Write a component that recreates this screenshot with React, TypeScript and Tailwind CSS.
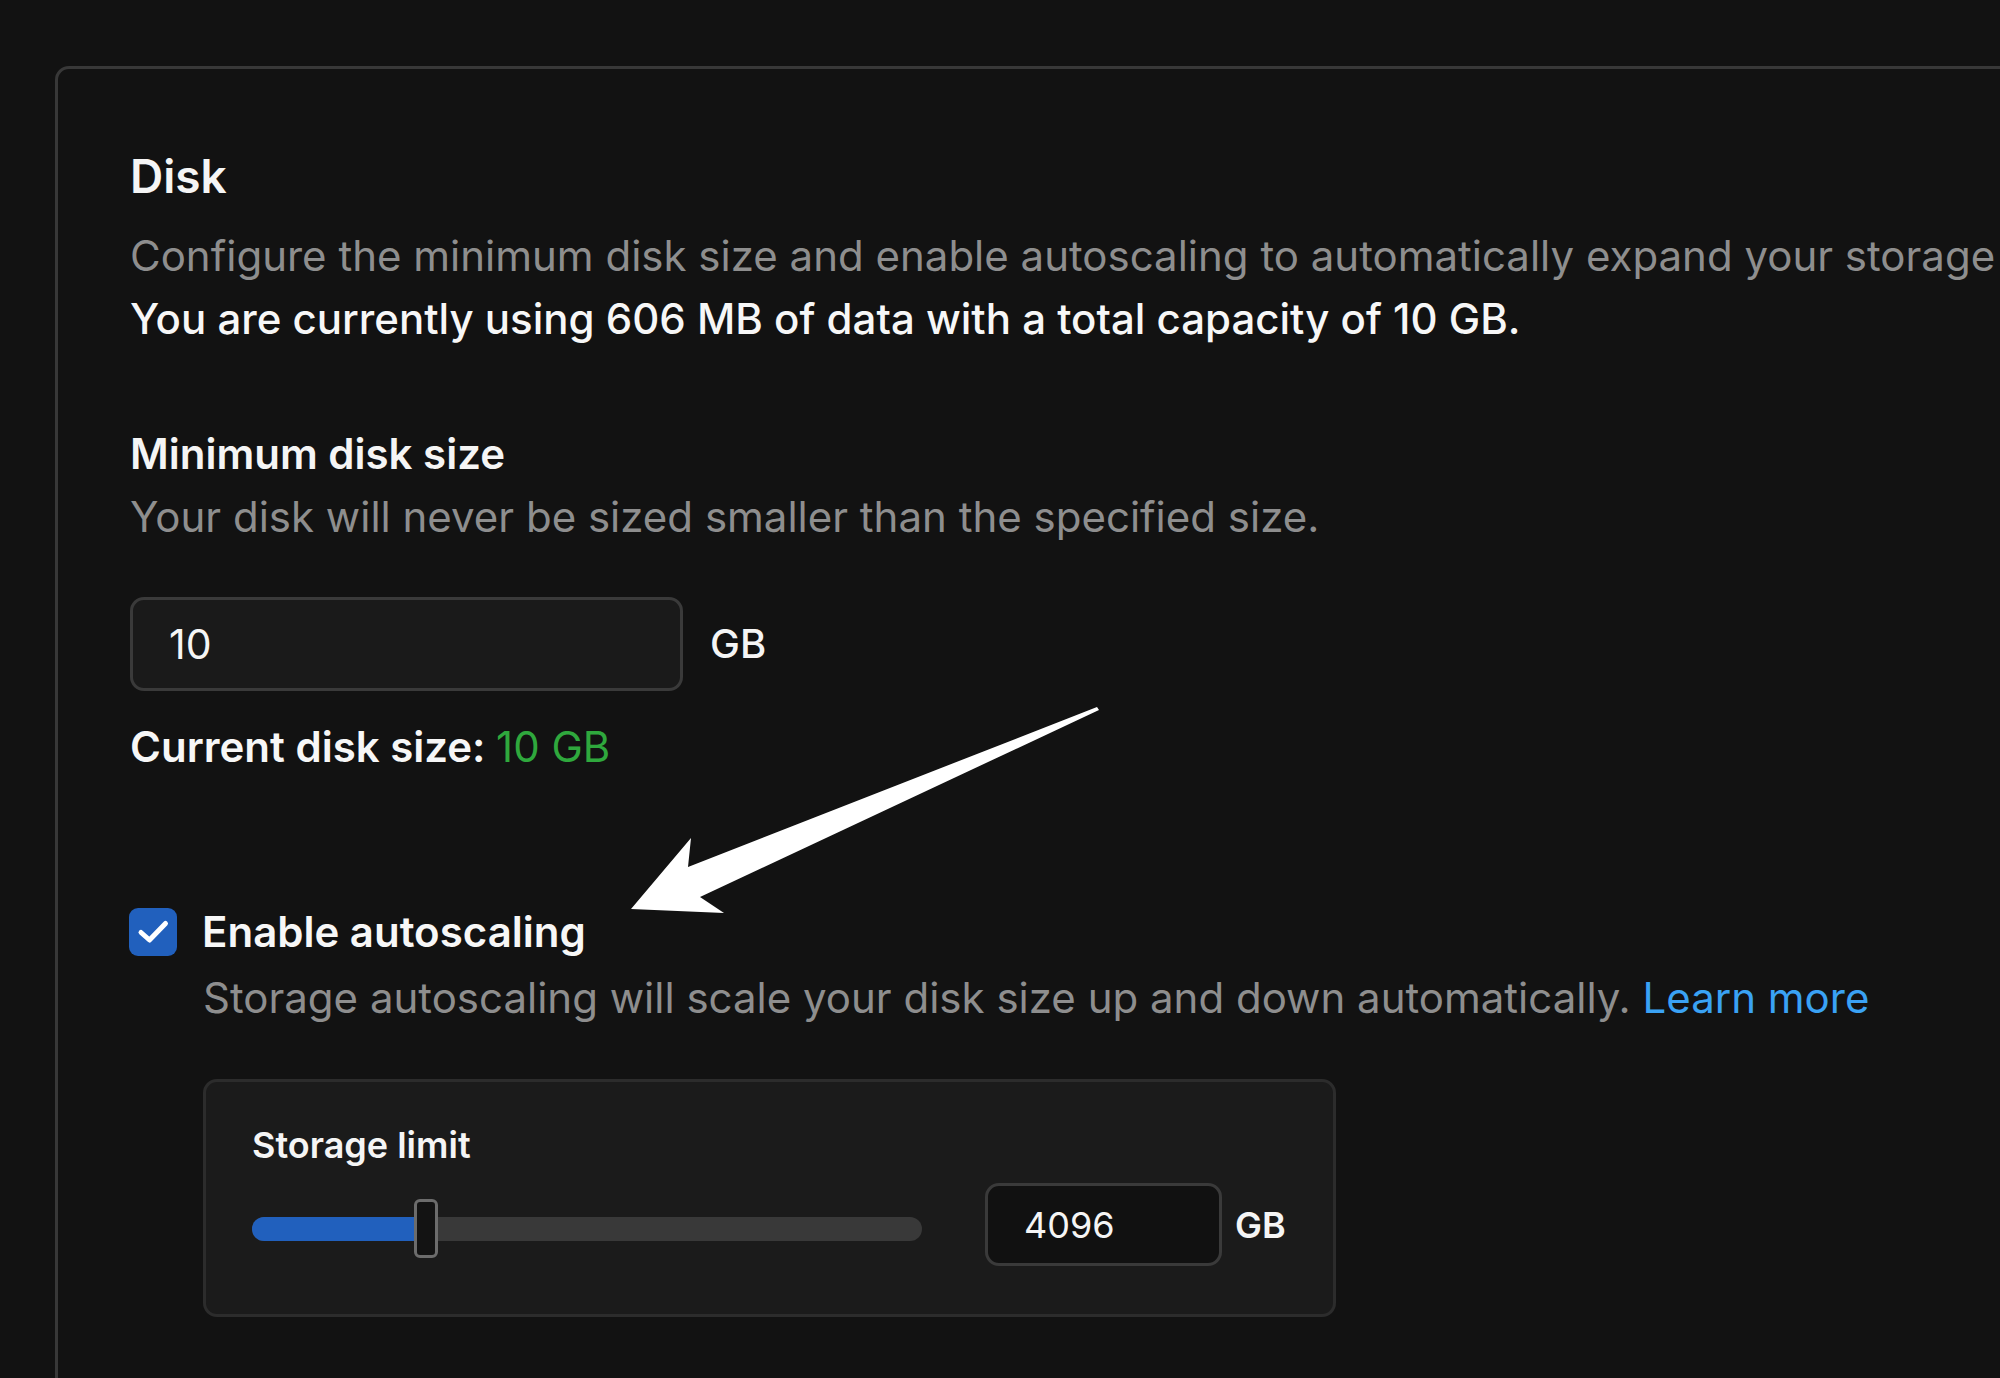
import React, { useState } from 'react';

const App: React.FC = () => {
  const [minSize, setMinSize] = useState('10');
  const [limit, setLimit] = useState('4096');
  const [autoscale, setAutoscale] = useState(true);

  return (
    <div className="relative w-[2000px] h-[1378px] overflow-hidden bg-[#121212] text-white font-['Inter','Liberation_Sans',sans-serif]">
      <div className="pt-[66px] pl-[55px]">
        {/* Disk card */}
        <div className="w-[2100px] h-[1400px] rounded-[14px] border-[3px] border-[#383838] bg-[#121212] pl-[72px] pt-[79px]">
          <h2 className="text-[46px] leading-[56px] font-semibold text-[#f5f5f5]">Disk</h2>
          <div className="mt-[20px] leading-[63px] whitespace-nowrap">
            <p className="text-[42px] text-[#8e8e8e]">
              Configure the minimum disk size and enable autoscaling to automatically expand your storage
            </p>
            <p className="text-[42px] font-medium text-[#f7f7f7]">
              You are currently using 606 MB of data with a total capacity of 10 GB.
            </p>
          </div>

          {/* Minimum disk size */}
          <div className="mt-[80px]">
            <h3 className="text-[42px] leading-[48px] font-semibold text-[#f5f5f5]">Minimum disk size</h3>
            <p className="mt-[15px] text-[42px] leading-[48px] text-[#8e8e8e]">
              Your disk will never be sized smaller than the specified size.
            </p>
            <div className="mt-[56px] flex items-center gap-[27px]">
              <input
                value={minSize}
                onChange={(e) => setMinSize(e.target.value)}
                className="w-[553px] h-[94px] rounded-[14px] border-[3px] border-[#3a3a3a] bg-[#1a1a1a] pl-[36px] text-[41px] text-[#f5f5f5] outline-none"
              />
              <span className="text-[40px] font-medium text-[#f5f5f5]">GB</span>
            </div>
            <p className="mt-[32px] text-[42px] leading-[48px] font-semibold text-[#f7f7f7]">
              Current disk size: <span className="font-normal text-[#2fa83d]">10 GB</span>
            </p>
          </div>

          {/* Autoscaling */}
          <div className="mt-[137px] -ml-[1px]">
            <label className="flex items-center gap-[25px] cursor-pointer">
              <button
                type="button"
                onClick={() => setAutoscale(!autoscale)}
                className={`w-[48px] h-[48px] rounded-[9px] flex items-center justify-center ${autoscale ? 'bg-[#2160bd]' : 'border-[3px] border-[#555]'}`}
              >
                {autoscale && (
                  <svg width="48" height="48" viewBox="0 0 48 48" fill="none">
                    <path d="M12 24.5 L20.5 32 L36.5 15.5" stroke="white" strokeWidth="5" strokeLinecap="round" strokeLinejoin="round" />
                  </svg>
                )}
              </button>
              <span className="text-[42px] leading-[48px] font-semibold text-[#f7f7f7]">Enable autoscaling</span>
            </label>
            <div className="pl-[74px]">
              <p className="mt-[18px] text-[42px] leading-[48px] text-[#8e8e8e] whitespace-nowrap">
                Storage autoscaling will scale your disk size up and down automatically.{' '}
                <a href="#" className="text-[#3aa2f4]">Learn more</a>
              </p>

              {/* Storage limit */}
              <div className="mt-[57px] w-[1133px] rounded-[14px] border-[3px] border-[#2c2c2c] bg-[#1b1b1b] pl-[46px] pt-[43px] pb-[48px]">
                <h4 className="text-[36px] leading-[40px] font-semibold text-[#f5f5f5]">Storage limit</h4>
                <div className="mt-[18px] flex items-start">
                  <div className="relative mt-[16px] w-[670px] h-[59px] flex items-center">
                    <div className="w-full h-[24px] rounded-full bg-[#393939] overflow-hidden">
                      <div className="h-full w-[170px] bg-[#2160bd]" />
                    </div>
                    <div className="absolute left-[162px] top-0 w-[24px] h-[59px] rounded-[6px] border-[3px] border-[#6c6c6c] bg-[#131313]" />
                  </div>
                  <input
                    value={limit}
                    onChange={(e) => setLimit(e.target.value)}
                    className="ml-[63px] w-[237px] h-[83px] rounded-[14px] border-[3px] border-[#3a3a3a] bg-[#111111] pl-[36px] text-[36px] text-[#f5f5f5] outline-none"
                  />
                  <span className="ml-[13px] h-[83px] flex items-center text-[36px] font-semibold text-[#f5f5f5]">GB</span>
                </div>
              </div>
            </div>
          </div>
        </div>
      </div>

      {/* Annotation arrow */}
      <svg className="absolute left-0 top-0 pointer-events-none" width="2000" height="1378" viewBox="0 0 2000 1378">
        <polygon points="1097,707 688,867 691,838 631,909 724,913 700,897 1099,710" fill="white" />
      </svg>
    </div>
  );
};

export default App;
